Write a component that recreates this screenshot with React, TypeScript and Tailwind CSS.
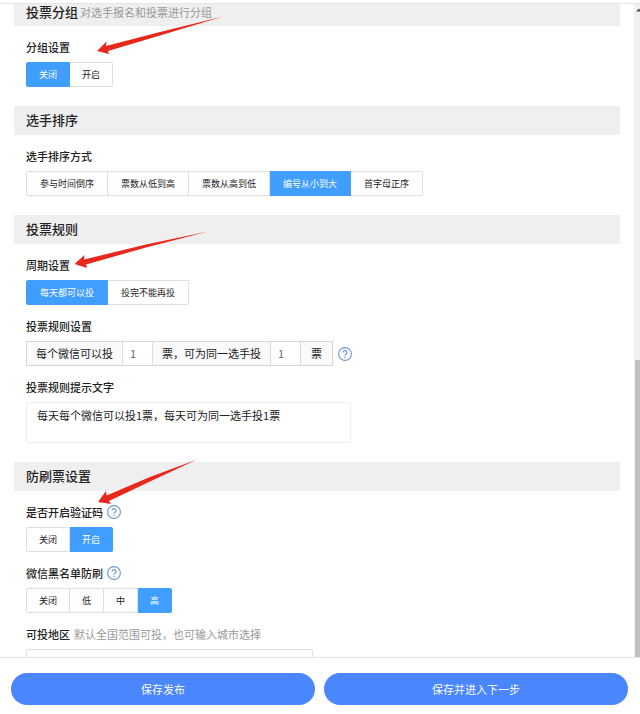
import React, { useState } from "react";

const HelpIcon = () => {
  return (
    <svg className="size-[14px] shrink-0" viewBox="0 0 14 14" fill="none" stroke="#6f97da" aria-hidden="true">
      <circle cx="7" cy="7" r="6.4" strokeWidth="1.1" />
      <path d="M5 5.6a2 2 0 1 1 3 1.7c-.7.4-1 .7-1 1.5" strokeWidth="1.2" />
      <path d="M7 9.8v1.2" strokeWidth="1.2" />
    </svg>
  );
};

const SectionTitle = ({ children }: { children: React.ReactNode }) => {
  return (
    <h2 className="flex h-[29px] items-center bg-[#efefef] px-3 pb-0.5 text-[13px] leading-4 font-medium">
      {children}
    </h2>
  );
};

type FieldProps = {
  label: string;
  hint?: string;
  help?: boolean;
  htmlFor?: string;
  children: React.ReactNode;
};

const Field = ({ label, hint, help, htmlFor, children }: FieldProps) => {
  const Label = htmlFor ? "label" : "span";
  return (
    <div className="px-3 pt-[13px]" role="group" aria-label={label}>
      <div className="mb-[7px] flex h-4 items-center gap-1 text-[11px] leading-4">
        <Label htmlFor={htmlFor} className="font-medium">
          {label}
        </Label>
        {hint && <span className="text-[#999]">{hint}</span>}
        {help && (
          <button type="button" aria-label={`${label}说明`}>
            <HelpIcon />
          </button>
        )}
      </div>
      {children}
    </div>
  );
};

type SegmentedProps = {
  options: string[];
  initial: number;
  compact?: boolean;
};

const Segmented = ({ options, initial, compact }: SegmentedProps) => {
  const [active, setActive] = useState(initial);
  return (
    <div className="flex h-[25px]">
      {options.map((option, i) => (
        <button
          key={option}
          type="button"
          aria-pressed={i === active}
          onClick={() => setActive(i)}
          className={`border-y border-r text-[9px] leading-4 first:rounded-l-xs first:border-l last:rounded-r-xs ${
            compact ? "px-3" : "px-[13px]"
          } ${i === active ? "border-[#409eff] bg-[#409eff] text-white" : "border-[#dcdfe6] bg-white"}`}
        >
          {option}
        </button>
      ))}
    </div>
  );
};

const VoteRule = () => {
  return (
    <div className="flex items-center gap-[5px]">
      <div className="flex h-[25px] items-stretch border border-[#d6d6d6] text-[11px] leading-[23px]">
        <span className="bg-[#fafafa] px-[9px]">每个微信可以投</span>
        <input
          aria-label="每个微信可投票数"
          defaultValue="1"
          className="w-[31px] border-x border-[#dcdcdc] px-[7px] text-[#666] outline-none"
        />
        <span className="bg-[#fafafa] px-[9px]">票，可为同一选手投</span>
        <input
          aria-label="同一选手可投票数"
          defaultValue="1"
          className="w-[31px] border-x border-[#dcdcdc] px-[7px] text-[#666] outline-none"
        />
        <span className="bg-[#fafafa] px-[10px]">票</span>
      </div>
      <button type="button" aria-label="投票规则说明">
        <HelpIcon />
      </button>
    </div>
  );
};

// red pointers drawn over the form
const Arrows = () => {
  return (
    <svg
      className="pointer-events-none absolute top-0 left-0 h-[520px] w-[240px]"
      viewBox="0 0 240 520"
      fill="#e8281c"
      aria-hidden="true"
    >
      <path d="M97 51L106.500 41.500L106 46L160 32L223 16.500L160 35.500L108 51L109 54Z" />
      <path d="M74.500 264L84.500 255L84 259.500L146 244.500L208 231.500L146 247.500L86 264.500L87 268Z" />
      <path d="M98 502L106 491L106.500 495.500L150 477L197 459.500L150 481.500L109 501L111 504Z" />
    </svg>
  );
};

export default function App() {
  return (
    <div className="relative flex h-screen flex-col overflow-hidden bg-white font-['Noto_Sans_CJK_SC',sans-serif] text-[#222]">
      <div className="h-1 shrink-0 border-b border-[#e4e4e4]" />
      <div className="flex min-h-0 flex-1">
        <main className="min-w-0 flex-1 overflow-hidden px-[14px]">
          <section className="pb-[19px]">
            <h2 className="flex h-[22px] items-start gap-0.5 bg-[#efefef] px-3 text-[13px] leading-4 font-medium">
              投票分组
              <span className="text-[11px] font-normal text-[#999]">对选手报名和投票进行分组</span>
            </h2>
            <Field label="分组设置">
              <Segmented options={["关闭", "开启"]} initial={0} compact />
            </Field>
          </section>

          <section className="pb-[19px]">
            <SectionTitle>选手排序</SectionTitle>
            <Field label="选手排序方式">
              <Segmented
                options={["参与时间倒序", "票数从低到高", "票数从高到低", "编号从小到大", "首字母正序"]}
                initial={3}
              />
            </Field>
          </section>

          <section className="pb-[19px]">
            <SectionTitle>投票规则</SectionTitle>
            <Field label="周期设置">
              <Segmented options={["每天都可以投", "投完不能再投"]} initial={0} />
            </Field>
            <Field label="投票规则设置">
              <VoteRule />
            </Field>
            <Field label="投票规则提示文字" htmlFor="rule-tip">
              <textarea
                id="rule-tip"
                defaultValue="每天每个微信可以投1票，每天可为同一选手投1票"
                className="block h-[41px] w-full max-w-[325px] resize-none rounded-xs border border-[#eee] px-[10px] py-1 text-[11px] leading-4 outline-none"
              />
            </Field>
          </section>

          <section>
            <SectionTitle>防刷票设置</SectionTitle>
            <Field label="是否开启验证码" help>
              <Segmented options={["关闭", "开启"]} initial={1} compact />
            </Field>
            <Field label="微信黑名单防刷" help>
              <Segmented options={["关闭", "低", "中", "高"]} initial={3} compact />
            </Field>
            <Field label="可投地区" hint="默认全国范围可投，也可输入城市选择" htmlFor="region">
              <input
                id="region"
                className="block h-[25px] w-full max-w-[287px] rounded-xs border border-[#dcdfe6] px-[10px] text-[11px] outline-none"
              />
            </Field>
          </section>
        </main>

        <div className="flex w-[6px] shrink-0 flex-col bg-[#f1f1f1]" aria-hidden="true">
          <svg className="mt-1 h-1 w-full" viewBox="0 0 6 4" fill="#505050">
            <path d="M2 3.500L5 0.500L6 1.500V3.500Z" />
          </svg>
          <div className="mt-auto ml-px h-5/11 bg-[#c1c1c1]" />
        </div>
      </div>

      <footer className="flex shrink-0 gap-[9px] border-t border-[#e4e4e4] pt-[15px] pr-3 pb-[9px] pl-[11px]">
        <button type="button" className="h-8 flex-1 rounded-full bg-[#4a86fe] text-[11px] text-white">
          保存发布
        </button>
        <button type="button" className="h-8 flex-1 rounded-full bg-[#4a86fe] text-[11px] text-white">
          保存并进入下一步
        </button>
      </footer>

      <Arrows />
    </div>
  );
}
